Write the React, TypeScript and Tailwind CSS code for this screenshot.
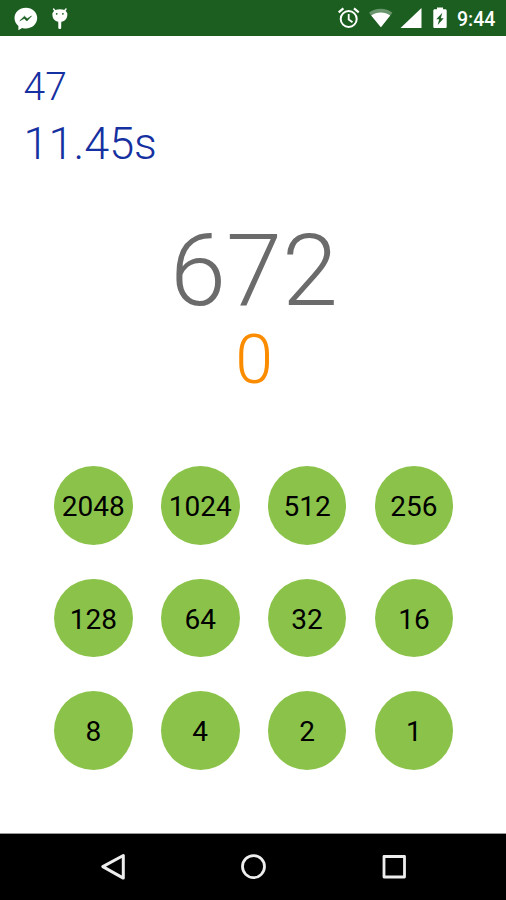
const VALUES = [2048, 1024, 512, 256, 128, 64, 32, 16, 8, 4, 2, 1];

function StatusBar() {
  return (
    <header className="h-[35.5px] shrink-0 bg-[#1b5e20] text-white">
      <div className="flex h-[35px] items-center justify-between">
        <svg className="h-[35px] w-[80px]" viewBox="0 0 80 35" fill="none">
          <path
            d="M26 7.800c-6.600 0-11.500 4.700-11.500 10.300 0 3.200 1.500 6 3.900 7.900v4.200l3.700-2.300c1.200.4 2.500.6 3.900.6 6.300 0 11.200-4.600 11.200-10.400S32.300 7.800 26 7.800z"
            fill="#fff"
          />
          <path d="M19.800 20.800l4.700-4.600 2.700 2.600 4.300-2.800-4.600 5-2.700-2.600z" fill="#1b5e20" stroke="#1b5e20" strokeWidth="0.600" />
          <path d="M53.600 9l2.400 3M66 9l-2.400 3" stroke="#fff" strokeWidth="1.500" strokeLinecap="round" />
          <path d="M52.400 13.200c1.500-3 4.200-3.900 7.500-3.900s6 .9 7.400 3.900c.5 5-2.300 8.700-7.400 8.700s-8-3.700-7.500-8.700z" fill="#fff" />
          <rect x="58.300" y="21" width="2.900" height="8" rx="1.300" fill="#fff" />
          <circle cx="56.700" cy="13.800" r="0.900" fill="#1b5e20" />
          <circle cx="62.900" cy="13.800" r="0.900" fill="#1b5e20" />
        </svg>
        <div className="flex h-full items-center">
          <svg className="h-[35px] w-[121px]" viewBox="336 0 121 35" fill="none">
            <circle cx="348.700" cy="19" r="8" stroke="#fff" strokeWidth="2" />
            <path d="M348.700 14v5.500l3.800 2.800" stroke="#fff" strokeWidth="1.800" />
            <path d="M338.700 12.300l4.700-3.900M358.700 12.300l-4.700-3.900" stroke="#fff" strokeWidth="2.200" />
            <path d="M369 12.700c6.300-5.400 17.100-5.400 23.400 0L380.900 27.300z" fill="#fff" fillOpacity="0.350" />
            <path d="M371.200 15.500c5.200-3.900 13.800-3.900 19 0l-9.300 11.800z" fill="#fff" />
            <path d="M421.500 8v20h-21z" fill="#fff" />
            <path d="M437 7.500h6v1.800h2.300c.8 0 1.400.6 1.400 1.400v16c0 .8-.6 1.400-1.400 1.400h-10.600c-.8 0-1.400-.6-1.400-1.400v-16c0-.8.6-1.400 1.400-1.400H437z" fill="#fff" />
            <path d="M442.300 12.700l-6 6.600h2.900l-1.500 5.600 6-6.700h-2.900z" fill="#1b5e20" />
          </svg>
          <span className="mr-[10px] w-[39px] whitespace-nowrap pt-[5px] text-[19.500px] font-medium leading-none">9:44</span>
        </div>
      </div>
    </header>
  );
}

function NavBar() {
  return (
    <nav className="flex h-[67px] shrink-0 items-center justify-between border-t border-[#999] bg-black px-[98px] pb-[2px]">
      <button aria-label="Back">
        <svg className="size-[30px]" viewBox="0 0 30 30" fill="none" stroke="#eee" strokeWidth="3" strokeLinejoin="round">
          <path d="M25.300 4.500v22.600L4.800 15.600z" />
        </svg>
      </button>
      <button aria-label="Home">
        <svg className="size-[30px]" viewBox="0 0 30 30" fill="none" stroke="#eee" strokeWidth="2.800">
          <circle cx="15.500" cy="15.600" r="11" />
        </svg>
      </button>
      <button aria-label="Recent apps">
        <svg className="size-[30px]" viewBox="0 0 30 30" fill="none" stroke="#eee" strokeWidth="2.800" strokeLinejoin="round">
          <rect x="6" y="5.500" width="20.500" height="20.500" />
        </svg>
      </button>
    </nav>
  );
}

export default function App() {
  return (
    <div className="flex h-[900px] w-[506px] flex-col overflow-hidden bg-white font-['Roboto','Liberation_Sans',sans-serif]">
      <StatusBar />
      <main className="flex grow flex-col">
        <div className="pl-[23.500px] pt-[31.500px] font-light text-[#1530a0]">
          <p className="text-[39px] leading-[40px]">47</p>
          <p className="mt-[14px] text-[45px] leading-[46px]">11.45s</p>
        </div>

        <div className="mt-[54px] pl-[2px] text-center">
          <p className="text-[101px] font-light leading-[100px] text-[#6b6b6b]">672</p>
          <p className="mt-[4px] text-[68px] font-light leading-[70px] text-[#fb8c00]">0</p>
        </div>

        <div className="mt-[71px] grid grid-cols-4 gap-x-[28px] gap-y-[34px] pl-[54px] pr-[52.500px]">
          {VALUES.map((value) => (
            <button
              key={value}
              className="flex size-[78.700px] items-center justify-center rounded-full bg-[#8bc34a] pt-[3px] text-[28px] leading-none text-black"
            >
              {value}
            </button>
          ))}
        </div>
      </main>
      <NavBar />
    </div>
  );
}
